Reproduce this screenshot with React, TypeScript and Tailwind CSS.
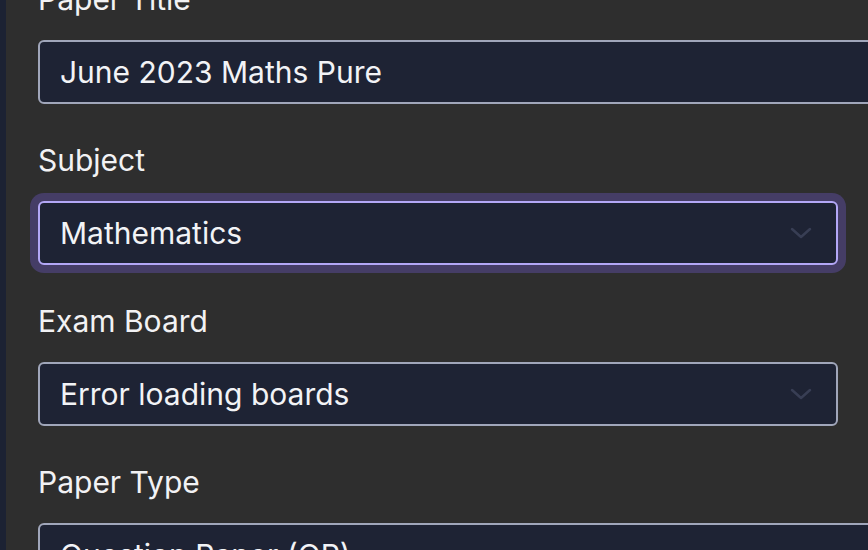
const fields = [
  { label: "Paper Title", kind: "input", value: "June 2023 Maths Pure" },
  { label: "Subject", kind: "select", value: "Mathematics", focused: true },
  { label: "Exam Board", kind: "select", value: "Error loading boards" },
  { label: "Paper Type", kind: "input", value: "Question Paper (QP)" },
]

function Chevron() {
  return (
    <svg width="22" height="12" viewBox="0 0 22 12" fill="none" className="shrink-0">
      <polyline points="2,2 11,10 20,2" stroke="#383e54" strokeWidth="2.5" strokeLinecap="round" strokeLinejoin="round" />
    </svg>
  )
}

export default function App() {
  return (
    <div className="flex h-[550px] w-[868px] overflow-hidden bg-[#2e2e2e] font-['Inter',sans-serif]">
      <div className="w-[6px] shrink-0 bg-[#1c2233]" />
      <div className="-mt-[21px] flex flex-col gap-[36px] pl-[32px]">
        {fields.map((f) => (
          <div key={f.label} className="flex flex-col gap-[21px]">
            <label className="text-[30px] leading-[40px] text-[#f2f2f4]">{f.label}</label>
            {f.kind === "input" ? (
              <div className="flex h-[64px] w-[900px] items-center rounded-[6px] border-2 border-[#a0a6ba] bg-[#1e2334] px-[20px] text-[30px] text-[#f2f3f6]">
                {f.value}
              </div>
            ) : (
              <div
                className={
                  f.focused
                    ? "flex h-[64px] w-[800px] items-center justify-between rounded-[6px] border-2 border-[#b3a7f6] bg-[#1e2334] pl-[20px] pr-[24px] text-[30px] text-[#f2f3f6] shadow-[0_0_0_8px_#453d66]"
                    : "flex h-[64px] w-[800px] items-center justify-between rounded-[6px] border-2 border-[#a0a6ba] bg-[#1e2334] pl-[20px] pr-[24px] text-[30px] text-[#f2f3f6]"
                }
              >
                <span>{f.value}</span>
                <Chevron />
              </div>
            )}
          </div>
        ))}
      </div>
    </div>
  )
}
